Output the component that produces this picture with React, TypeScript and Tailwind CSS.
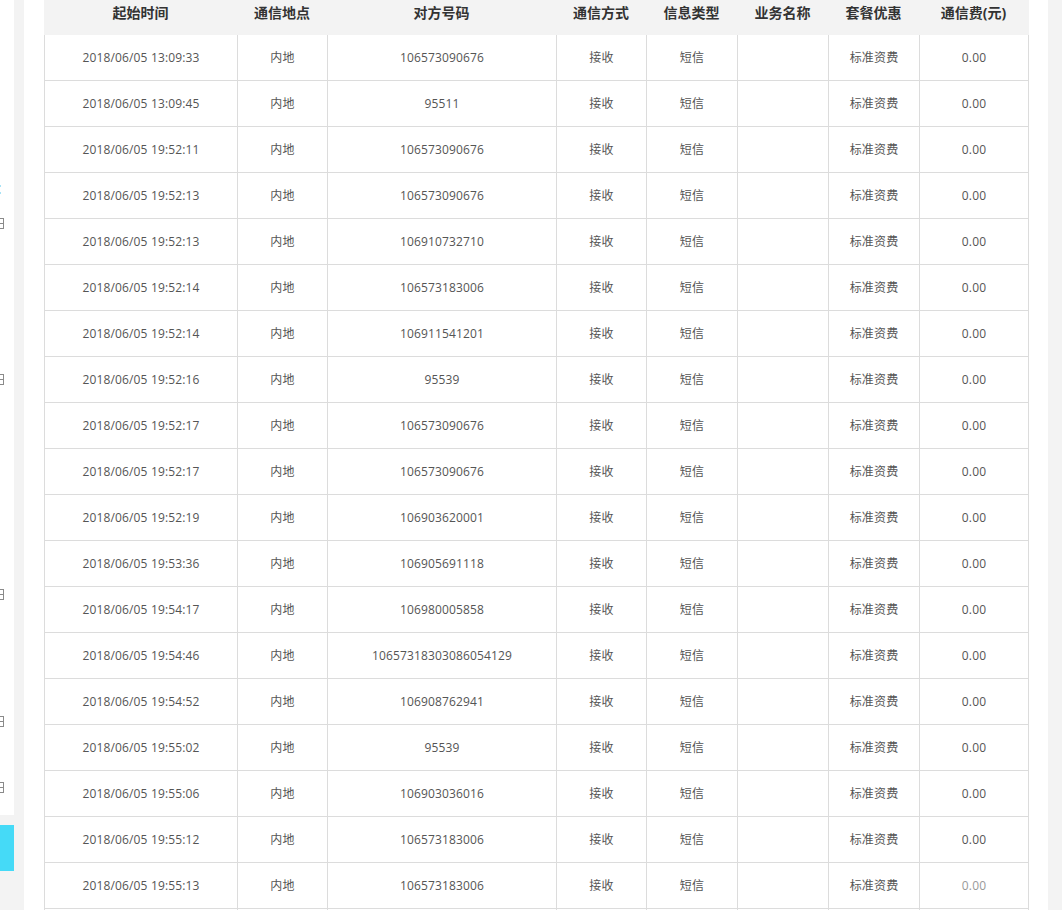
const cols = ['起始时间', '通信地点', '对方号码', '通信方式', '信息类型', '业务名称', '套餐优惠', '通信费(元)'];

const rows: [string, string][] = [
  ['13:09:33', '106573090676'],
  ['13:09:45', '95511'],
  ['19:52:11', '106573090676'],
  ['19:52:13', '106573090676'],
  ['19:52:13', '106910732710'],
  ['19:52:14', '106573183006'],
  ['19:52:14', '106911541201'],
  ['19:52:16', '95539'],
  ['19:52:17', '106573090676'],
  ['19:52:17', '106573090676'],
  ['19:52:19', '106903620001'],
  ['19:53:36', '106905691118'],
  ['19:54:17', '106980005858'],
  ['19:54:46', '10657318303086054129'],
  ['19:54:52', '106908762941'],
  ['19:55:02', '95539'],
  ['19:55:06', '106903036016'],
  ['19:55:12', '106573183006'],
  ['19:55:13', '106573183006'],
];

const grid = 'grid grid-cols-[193px_90px_229px_90px_91px_91px_91px_109px]';
const cell = 'border-l border-[#dcdcdc] flex items-center justify-center';

function EdgeIcon({ top }: { top: number }) {
  // cut-off icons of the collapsed side menu
  return (
    <div style={{ marginTop: top }} className="h-[11px] w-[12px] -ml-[8px] border border-[#8a8a8a] flex items-center">
      <div className="ml-auto w-[3px] h-px bg-[#8a8a8a]" />
    </div>
  );
}

function Sidebar() {
  return (
    <div className="w-[14px] shrink-0 flex flex-col overflow-hidden">
      <div className="h-[815px] bg-white flex flex-col">
        <div className="mt-[185px] w-px h-[2px] bg-[#a8e2f5]" />
        <div className="mt-[5px] w-px h-[2px] bg-[#a8e2f5]" />
        <EdgeIcon top={24} />
        <EdgeIcon top={145} />
        <EdgeIcon top={204} />
        <EdgeIcon top={116} />
        <EdgeIcon top={55} />
      </div>
      <div className="mt-[10px] h-[46px] bg-[#45daf7]" />
    </div>
  );
}

export default function App() {
  return (
    <div className="h-[910px] overflow-hidden bg-[#f3f3f3] flex font-['Open_Sans','Noto_Sans_CJK_SC',sans-serif]">
      <Sidebar />
      <main className="ml-[10px] w-[1024px] bg-white px-[20px]">
        <div className="w-[985px]">
          <div className={`${grid} h-[35px] bg-[#f3f3f3] text-[14px] font-bold text-[#333]`}>
            {cols.map((c) => (
              <div key={c} className="pt-[3px] leading-[20px] text-center">{c}</div>
            ))}
          </div>
          <div className="border-r border-[#dcdcdc]">
            {rows.map(([t, num], i) => (
              <div key={i} className={`${grid} h-[46px] border-b border-[#dcdcdc] text-[12px] tracking-[0.15px] text-[#555]`}>
                <div className={cell}>2018/06/05 {t}</div>
                <div className={cell}>内地</div>
                <div className={cell}>{num}</div>
                <div className={cell}>接收</div>
                <div className={cell}>短信</div>
                <div className="border-l border-[#dcdcdc]" />
                <div className={cell}>标准资费</div>
                <div className={`${cell} ${i === rows.length - 1 ? 'text-[#999]' : ''}`}>0.00</div>
              </div>
            ))}
            {/* next row, scrolled below the fold */}
            <div className={`${grid} h-[46px]`}>
              {cols.map((c) => (
                <div key={c} className="border-l border-[#dcdcdc]" />
              ))}
            </div>
          </div>
        </div>
      </main>
    </div>
  );
}
